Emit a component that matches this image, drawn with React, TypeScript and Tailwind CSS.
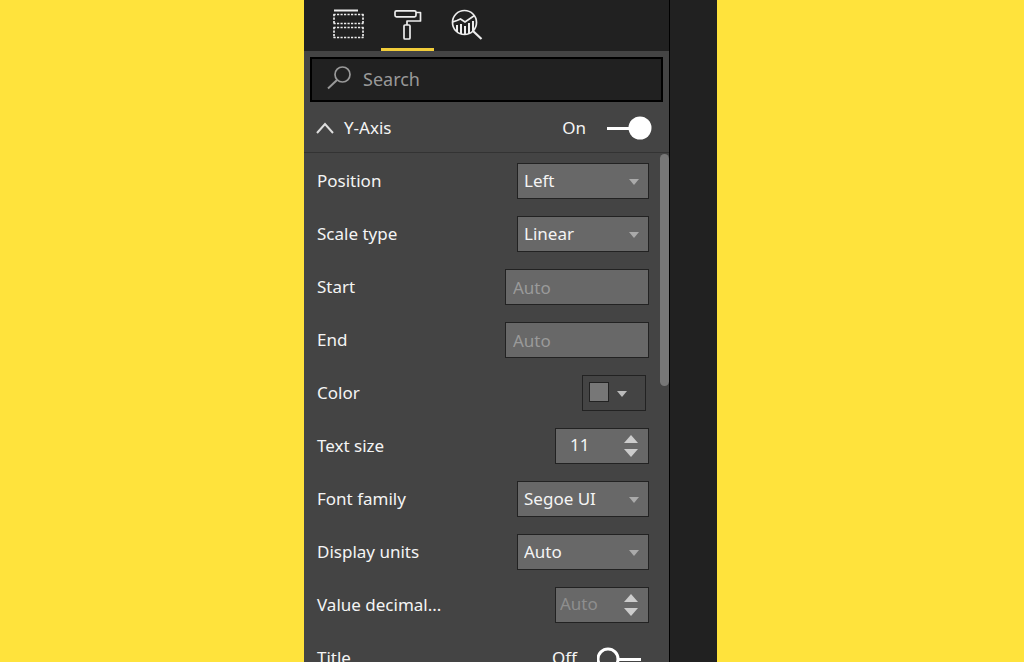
import { useId, useState, type ReactNode } from "react";

function Caret({ className }: { className: string }) {
  return (
    <svg viewBox="0 0 10 6" className={`h-1.5 w-2.5 ${className}`} aria-hidden>
      <path d="M0 0h10L5 6z" fill="currentColor" />
    </svg>
  );
}

function FieldsIcon() {
  return (
    <svg width="32" height="30" viewBox="0 0 32 30" fill="none" stroke="#ededed">
      <path d="M1 1.500h24" strokeWidth="2" />
      <path
        d="M0.500 5.500h30M0.500 14.500h30M0.500 18.500h30M0.500 28.500h30M1 5v10M30 5v10M1 18v11M30 18v11"
        strokeWidth="1.700"
        strokeDasharray="2.200 1.300"
      />
    </svg>
  );
}

function RollerIcon() {
  return (
    <svg
      width="28"
      height="32"
      viewBox="0 0 28 32"
      fill="none"
      stroke="#ededed"
      strokeWidth="1.700"
      strokeLinejoin="round"
    >
      <rect x="1" y="1.800" width="21" height="6" rx="1.500" />
      <path d="M22 3.500h4.500V12H13v4" />
      <rect x="10" y="16" width="6" height="14" rx="1" />
    </svg>
  );
}

function AnalyticsIcon() {
  return (
    <svg
      width="32"
      height="32"
      viewBox="0 0 32 32"
      fill="none"
      stroke="#ededed"
      strokeWidth="1.700"
    >
      <circle cx="13.500" cy="13.500" r="12" />
      <path d="M22 22l8.500 8" strokeWidth="2.200" />
      <path d="M1.500 13l4.500-1.500 3.500-1.500 4.500 3L23.500 6.500" />
      <path d="M6 16v7M10 15v10M14 17v8.500M18 14v11M22 12v10" strokeWidth="2" />
    </svg>
  );
}

function Tab({
  label,
  active,
  children,
}: {
  label: string;
  active?: boolean;
  children: ReactNode;
}) {
  return (
    <button
      type="button"
      role="tab"
      aria-label={label}
      aria-selected={!!active}
      className={`flex h-full w-[53px] justify-center border-b-3 pt-[9px] ${
        active ? "border-[#f2cd3a]" : "border-transparent"
      }`}
    >
      {children}
    </button>
  );
}

function Toggle({ label, initial }: { label: string; initial: boolean }) {
  const [on, setOn] = useState(initial);
  return (
    <label className="flex items-center gap-5">
      <span>{on ? "On" : "Off"}</span>
      <input
        type="checkbox"
        role="switch"
        aria-label={label}
        className="sr-only"
        checked={on}
        onChange={(e) => setOn(e.target.checked)}
      />
      <svg width="46" height="24" viewBox="0 0 46 24" aria-hidden>
        {on ? (
          <>
            <path d="M1 12.500h26" stroke="#fff" strokeWidth="3" />
            <circle cx="34" cy="12" r="11.500" fill="#fff" />
          </>
        ) : (
          <>
            <path d="M22 13.500h22" stroke="#fff" strokeWidth="3" />
            <circle cx="11" cy="13" r="10" fill="none" stroke="#fff" strokeWidth="3" />
          </>
        )}
      </svg>
    </label>
  );
}

const box = "h-9 border border-[#222] bg-[#686868]";

function Row({
  label,
  htmlFor,
  children,
}: {
  label: string;
  htmlFor?: string;
  children: ReactNode;
}) {
  return (
    <div className="flex h-[53px] shrink-0 items-center justify-between pr-[11px] pl-[13px]">
      <label htmlFor={htmlFor}>{label}</label>
      {children}
    </div>
  );
}

function SelectRow({ label, options }: { label: string; options: string[] }) {
  const id = useId();
  return (
    <Row label={label} htmlFor={id}>
      <div className="relative">
        <select
          id={id}
          className={`${box} w-[132px] appearance-none pl-1.5 outline-none`}
        >
          {options.map((o) => (
            <option key={o}>{o}</option>
          ))}
        </select>
        <Caret className="pointer-events-none absolute top-4 right-2.5 text-[#aaa]" />
      </div>
    </Row>
  );
}

function TextRow({ label }: { label: string }) {
  const id = useId();
  return (
    <Row label={label} htmlFor={id}>
      <input
        id={id}
        placeholder="Auto"
        className={`${box} w-36 px-[7px] pt-0.5 outline-none placeholder:text-[#9a9a9a]`}
      />
    </Row>
  );
}

function NumberRow({ label, initial }: { label: string; initial: string }) {
  const id = useId();
  const [value, setValue] = useState(initial);
  const step = (by: number) => setValue(String(Number(value) + by));
  return (
    <Row label={label} htmlFor={id}>
      <div className={`${box} flex w-[94px] items-center justify-between pr-2.5`}>
        <input
          id={id}
          inputMode="numeric"
          placeholder="Auto"
          value={value}
          onChange={(e) => setValue(e.target.value)}
          className="w-14 pb-0.5 pl-3.5 outline-none placeholder:text-[#8e8e8e] placeholder-shown:pl-1"
        />
        <div className="flex flex-col gap-1.5 text-[#ccc]">
          <button type="button" aria-label={`Increase ${label}`} onClick={() => step(1)}>
            <svg width="14" height="8" viewBox="0 0 14 8" className="block">
              <path d="M0 8h14L7 0z" fill="currentColor" />
            </svg>
          </button>
          <button type="button" aria-label={`Decrease ${label}`} onClick={() => step(-1)}>
            <svg width="14" height="8" viewBox="0 0 14 8" className="block">
              <path d="M0 0h14L7 8z" fill="currentColor" />
            </svg>
          </button>
        </div>
      </div>
    </Row>
  );
}

function ColorRow() {
  const id = useId();
  return (
    <Row label="Color" htmlFor={id}>
      <button
        id={id}
        type="button"
        className="mr-[3px] flex h-9 w-16 items-center gap-2 border border-[#222] pl-1.5"
      >
        <span className="mb-0.5 size-5 border border-[#222] bg-[#777]" />
        <Caret className="mt-0.5 text-[#bbb]" />
      </button>
    </Row>
  );
}

function FormatPane() {
  return (
    <section className="flex min-w-0 flex-1 flex-col bg-[#444]">
      <div role="tablist" className="flex h-[51px] shrink-0 gap-1.5 bg-[#212121] pl-[18px]">
        <Tab label="Fields">
          <FieldsIcon />
        </Tab>
        <Tab label="Format" active>
          <RollerIcon />
        </Tab>
        <Tab label="Analytics">
          <AnalyticsIcon />
        </Tab>
      </div>

      <label className="m-1.5 mb-0 flex h-[45px] shrink-0 items-center gap-3 border-2 border-black bg-[#212121] pl-[15px]">
        <svg
          width="24"
          height="24"
          viewBox="0 0 24 24"
          fill="none"
          stroke="#999"
          className="mb-1"
          aria-hidden
        >
          <circle cx="15.500" cy="8.500" r="7.500" strokeWidth="1.700" />
          <path d="M10 14L1 22.500" strokeWidth="2" />
        </svg>
        <input
          type="search"
          aria-label="Search"
          placeholder="Search"
          className="min-w-0 flex-1 pb-0.5 text-lg outline-none placeholder:text-[#999]"
        />
      </label>

      <div className="flex h-[51px] shrink-0 items-center justify-between border-b border-[#333] pt-0.5 pr-[17px] pl-3">
        <button type="button" aria-expanded className="flex items-center gap-2.5">
          <svg width="18" height="12" viewBox="0 0 18 12" fill="none" aria-hidden>
            <path d="M1 11l8-9 8 9" stroke="#ddd" strokeWidth="2" />
          </svg>
          Y-Axis
        </button>
        <Toggle label="Y-Axis" initial />
      </div>

      <div className="flex min-h-0 flex-1 pt-px">
        <div className="flex min-w-0 flex-1 flex-col overflow-hidden">
          <SelectRow label="Position" options={["Left", "Right"]} />
          <SelectRow label="Scale type" options={["Linear", "Log"]} />
          <TextRow label="Start" />
          <TextRow label="End" />
          <ColorRow />
          <NumberRow label="Text size" initial="11" />
          <SelectRow label="Font family" options={["Segoe UI", "Arial"]} />
          <SelectRow label="Display units" options={["Auto", "None"]} />
          <NumberRow label="Value decimal..." initial="" />
          <Row label="Title">
            <div className="mr-1.5">
              <Toggle label="Title" initial={false} />
            </div>
          </Row>
        </div>
        <div className="h-[232px] w-[9px] rounded-full bg-[#777]" />
      </div>
    </section>
  );
}

export default function App() {
  return (
    <main className="flex h-screen justify-center overflow-hidden bg-[#ffe33c] pr-[3px] font-['Noto_Sans',sans-serif] text-[17px] leading-6 text-[#f4f4f4]">
      <div className="flex w-full max-w-[413px]">
        <FormatPane />
        <aside className="w-12 border-l border-black bg-[#212121]" />
      </div>
    </main>
  );
}
